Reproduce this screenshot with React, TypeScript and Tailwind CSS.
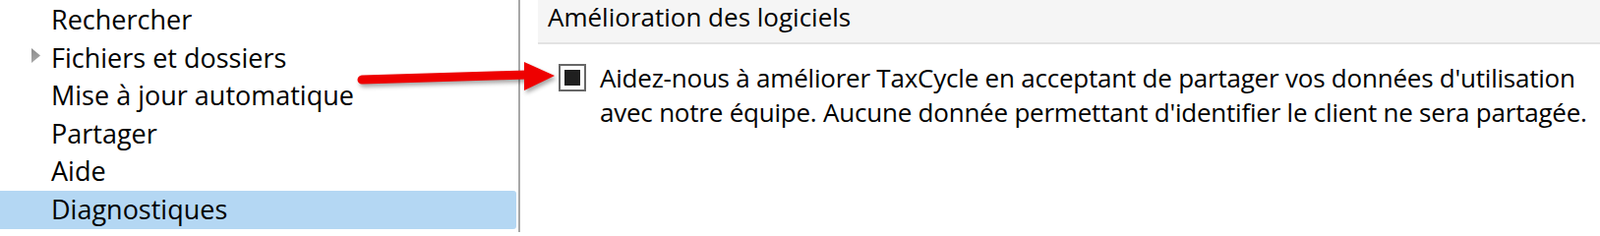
const items = [
  { label: "Rechercher" },
  { label: "Fichiers et dossiers", expandable: true },
  { label: "Mise à jour automatique" },
  { label: "Partager" },
  { label: "Aide" },
  { label: "Diagnostiques", selected: true },
];

const font = { fontFamily: '"Open Sans", "Noto Sans", sans-serif' };

const App = () => {
  return (
    <div
      className="relative flex w-[1627px] h-[236px] overflow-hidden bg-white text-black text-[26px]"
      style={font}
    >
      {/* Left tree */}
      <div className="w-[527px] shrink-0 pt-px text-[27px]">
        {items.map((item) => (
          <div
            key={item.label}
            className={`flex items-center h-[38.6px] leading-[38.6px] mr-[2px] rounded-r-[3px] ${
              item.selected ? "bg-[#b4d7f3]" : ""
            }`}
          >
            <div className="w-[52px] shrink-0 flex justify-end pr-[11px]">
              {item.expandable && (
                <svg width="9" height="15" viewBox="0 0 9 15" className="-mt-[4px]">
                  <defs>
                    <linearGradient id="tri" x1="0" y1="0" x2="0" y2="1">
                      <stop offset="0" stopColor="#8c8c8c" />
                      <stop offset="1" stopColor="#a8a8a8" />
                    </linearGradient>
                  </defs>
                  <path d="M0 0 L9 7.5 L0 15 Z" fill="url(#tri)" />
                </svg>
              )}
            </div>
            <span className="whitespace-nowrap">{item.label}</span>
          </div>
        ))}
      </div>

      {/* Splitter */}
      <div className="w-[2px] shrink-0 bg-[#a8a8a8]" />

      {/* Right content */}
      <div className="flex-1 pl-[18px]">
        <div className="h-[45px] bg-[#f5f5f5] border-b-2 border-[#e2e2e2] pl-[10px] leading-[35px] whitespace-nowrap">
          Amélioration des logiciels
        </div>
        <div className="flex items-start mt-[17px] pl-[21px]">
          <div className="mt-[3px] w-[28px] h-[28px] shrink-0 border-2 border-[#676767] flex items-center justify-center">
            <div className="w-[16px] h-[16px] bg-[#1f1f1f]" />
          </div>
          <p className="ml-[14px] leading-[35px] whitespace-nowrap tracking-[-0.22px]">
            Aidez-nous à améliorer TaxCycle en acceptant de partager vos données d'utilisation
            <br />
            avec notre équipe. Aucune donnée permettant d'identifier le client ne sera partagée.
          </p>
        </div>
      </div>

      {/* Annotation arrow */}
      <svg
        className="absolute left-[360px] top-[56px] drop-shadow-[2px_3px_2px_rgba(0,0,0,0.35)]"
        width="212"
        height="44"
        viewBox="0 0 212 44"
      >
        <path d="M8 25 L176 20" stroke="#ee0000" strokeWidth="9" strokeLinecap="round" />
        <path d="M173 7 L204 21 L173 36 Z" fill="#ee0000" />
      </svg>
    </div>
  );
};

export default App;
